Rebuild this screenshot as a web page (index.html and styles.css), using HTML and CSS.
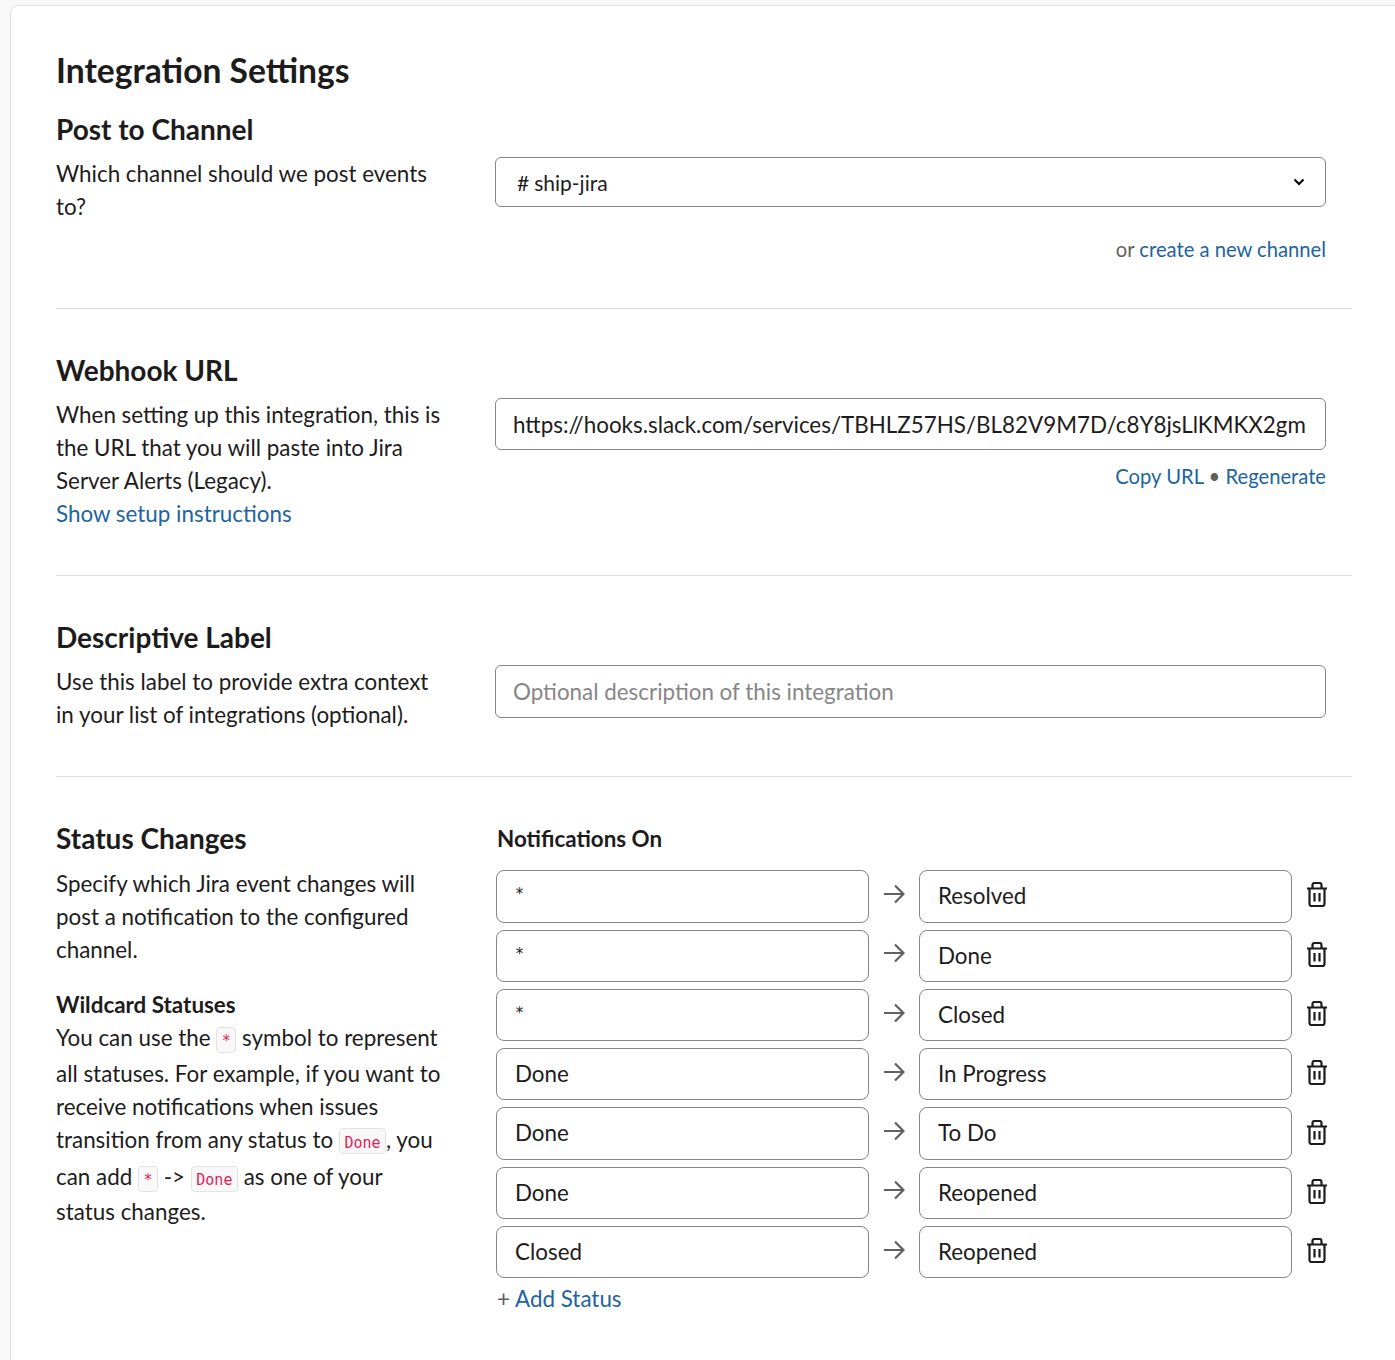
FILE: index.html
```html
<!DOCTYPE html>
<html lang="en">
<head>
    <meta charset="UTF-8">
    <meta name="viewport" content="width=device-width, initial-scale=1.0">
    <title>Integration Settings</title>
    <link rel="stylesheet" href="styles.css">
</head>
<body>

    <svg class="sprite" width="0" height="0">
        <symbol id="arrow" viewBox="0 0 22 22">
            <path d="M1 11h19M12 2.500l8.500 8.500-8.500 8.500" fill="none" stroke="currentColor" stroke-width="2.200"/>
        </symbol>
        <symbol id="trash" viewBox="0 0 20 25">
            <path d="M0 6.500h20M2.500 6.500v15.500a2 2 0 0 0 2 2h11a2 2 0 0 0 2-2V6.500M5.500 6.500V3a2 2 0 0 1 2-2h5a2 2 0 0 1 2 2v3.500M7.500 11v8.500M12.500 11v8.500" fill="none" stroke="currentColor" stroke-width="2.200"/>
        </symbol>
    </svg>

    <div class="card">
        <h1 class="page-title">Integration Settings</h1>

        <div class="section section-first">
            <div class="info">
                <h2>Post to Channel</h2>
                <p>Which channel should we post events to?</p>
            </div>
            <div class="control">
                <div class="select">
                    <span class="channel"><span class="hash">#</span>ship-jira</span>
                    <svg class="chevron" width="12" height="8" viewBox="0 0 12 8"><path d="M1.500 1.500L6 6l4.500-4.500" fill="none" stroke="currentColor" stroke-width="2"/></svg>
                </div>
                <div class="hint"><span class="muted">or</span> <a href="#">create a new channel</a></div>
            </div>
        </div>

        <div class="section section-webhook">
            <div class="info">
                <h2>Webhook URL</h2>
                <p>When setting up this integration, this is the URL that you will paste into Jira Server Alerts (Legacy).<br><a href="#">Show setup instructions</a></p>
            </div>
            <div class="control">
                <input class="field" type="text" value="https://hooks.slack.com/services/TBHLZ57HS/BL82V9M7D/c8Y8jsLlKMKX2gm">
                <div class="hint hint-url"><a href="#">Copy URL</a> <span class="dot">•</span> <a href="#">Regenerate</a></div>
            </div>
        </div>

        <div class="section section-label">
            <div class="info">
                <h2>Descriptive Label</h2>
                <p>Use this label to provide extra context in your list of integrations (optional).</p>
            </div>
            <div class="control">
                <input class="field" type="text" placeholder="Optional description of this integration">
            </div>
        </div>

        <div class="section section-status">
            <div class="info">
                <h2>Status Changes</h2>
                <p>Specify which Jira event changes will post a notification to the configured channel.</p>
                <h3>Wildcard Statuses</h3>
                <p class="wildcard">You can use the <code>*</code> symbol to represent all statuses. For example, if you want to receive notifications when issues transition from any status to <code class="code-tall">Done</code>, you can add <code class="code-short">*</code> -&gt; <code class="code-short">Done</code> as one of your status changes.</p>
            </div>
            <div class="control">
                <h3 class="notify-title">Notifications On</h3>
                <div class="status-row">
                    <div class="status-box star">*</div>
                    <svg class="arrow"><use href="#arrow"/></svg>
                    <div class="status-box">Resolved</div>
                    <svg class="trash"><use href="#trash"/></svg>
                </div>
                <div class="status-row">
                    <div class="status-box star">*</div>
                    <svg class="arrow"><use href="#arrow"/></svg>
                    <div class="status-box">Done</div>
                    <svg class="trash"><use href="#trash"/></svg>
                </div>
                <div class="status-row">
                    <div class="status-box star">*</div>
                    <svg class="arrow"><use href="#arrow"/></svg>
                    <div class="status-box">Closed</div>
                    <svg class="trash"><use href="#trash"/></svg>
                </div>
                <div class="status-row">
                    <div class="status-box">Done</div>
                    <svg class="arrow"><use href="#arrow"/></svg>
                    <div class="status-box">In Progress</div>
                    <svg class="trash"><use href="#trash"/></svg>
                </div>
                <div class="status-row">
                    <div class="status-box">Done</div>
                    <svg class="arrow"><use href="#arrow"/></svg>
                    <div class="status-box">To Do</div>
                    <svg class="trash"><use href="#trash"/></svg>
                </div>
                <div class="status-row">
                    <div class="status-box">Done</div>
                    <svg class="arrow"><use href="#arrow"/></svg>
                    <div class="status-box">Reopened</div>
                    <svg class="trash"><use href="#trash"/></svg>
                </div>
                <div class="status-row">
                    <div class="status-box">Closed</div>
                    <svg class="arrow"><use href="#arrow"/></svg>
                    <div class="status-box">Reopened</div>
                    <svg class="trash"><use href="#trash"/></svg>
                </div>
                <div class="add-status"><span class="muted">+</span> <a href="#">Add Status</a></div>
            </div>
        </div>
    </div>

</body>
</html>
```

FILE: styles.css
```css
html, body {
    height: 100%;
}

body {
    margin: 0;
    overflow: hidden;
    background-color: #f8f8f8;
    font-family: 'Lato', sans-serif;
    font-size: 22.400px;
    line-height: 33px;
    color: #1d1c1d;
}

a {
    color: #1e64a0;
    text-decoration: none;
}

p {
    margin: 0;
}

.sprite {
    position: absolute;
}

.card {
    box-sizing: border-box;
    width: 1400px;
    height: 1380px;
    margin: 5px 0 0 10px;
    padding: 42px 0 0 45px;
    background-color: #fff;
    border: 1px solid #e2e2e2;
    border-radius: 8px;
}

.page-title {
    margin: 0 0 19px;
    font-size: 33.600px;
    line-height: 44px;
    font-weight: 700;
}

.section {
    display: flex;
    width: 1296px;
    padding-right: 26px;
    box-sizing: border-box;
    border-bottom: 1px solid #ddd;
}

.section-first {
    height: 198px;
}

.section-webhook {
    height: 267px;
    padding-top: 43px;
}

.section-label {
    height: 201px;
    padding-top: 43px;
}

.section-status {
    padding-top: 43px;
    border-bottom: 0;
}

.info {
    width: 439px;
    flex-shrink: 0;
    padding-right: 52px;
    box-sizing: border-box;
}

.control {
    flex: 1;
    min-width: 0;
}

h2 {
    margin: 0 0 10px;
    font-size: 28px;
    line-height: 36px;
    font-weight: 700;
}

.section-status h2 {
    margin-bottom: 11px;
}

h3 {
    margin: 23px 0 0;
    font-size: 22.400px;
    line-height: 32px;
    font-weight: 700;
}

.select {
    display: flex;
    align-items: center;
    justify-content: space-between;
    box-sizing: border-box;
    height: 50px;
    margin-top: 46px;
    padding: 0 20px 0 21px;
    border: 1px solid #868686;
    border-radius: 6px;
}

.channel {
    font-size: 21px;
}

.hash {
    margin-right: 5px;
}

.chevron {
    color: #000;
}

.hint {
    margin-top: 26px;
    text-align: right;
    font-size: 20.200px;
    color: #1e64a0;
}

.hint-url {
    margin-top: 10px;
}

.muted, .dot {
    color: #616061;
}

.field {
    display: block;
    box-sizing: border-box;
    width: 100%;
    height: 52.500px;
    padding: 0 17px;
    border: 1px solid #868686;
    border-radius: 6px;
    background-color: #fff;
    font: 22.400px/1 'Lato', sans-serif;
    color: #1d1c1d;
}

.section-webhook .field,
.section-label .field {
    margin-top: 46px;
}

.section-webhook .field {
    height: 52px;
}

.field::placeholder {
    color: #868686;
    opacity: 1;
}

code {
    display: inline-block;
    margin-bottom: 4px;
    padding: 3.500px 4.500px 0.500px;
    border: 1px solid #e3e3e3;
    border-radius: 4px;
    background-color: #f8f8f8;
    font-family: 'DejaVu Sans Mono', monospace;
    font-size: 15px;
    line-height: 20px;
    color: #e01e5a;
}

code.code-tall {
    margin-bottom: 6px;
}

code.code-short {
    margin-bottom: 3px;
}

.notify-title {
    margin: 1px 0 13.300px 2px;
    line-height: 36px;
}

.status-row {
    display: flex;
    align-items: center;
    height: 52.300px;
    margin-bottom: 7px;
    margin-left: 1px;
}

.status-box {
    flex-shrink: 0;
    box-sizing: border-box;
    width: 373px;
    height: 100%;
    padding: 8px 18px 0;
    border: 1px solid #868686;
    border-radius: 8px;
    font-size: 22.400px;
}

.status-box.star {
    padding: 7px 18px 0;
    font-family: 'DejaVu Sans Mono', monospace;
    font-size: 15px;
}

.arrow {
    flex-shrink: 0;
    width: 22px;
    height: 22px;
    margin: -5px 14px 0 14px;
    color: #616061;
}

.trash {
    flex-shrink: 0;
    width: 20px;
    height: 25px;
    margin: -3px 0 0 15px;
    color: #1d1c1d;
}

.add-status {
    margin: -4px 0 0 2px;
    font-size: 22.400px;
    line-height: 36px;
}
```
